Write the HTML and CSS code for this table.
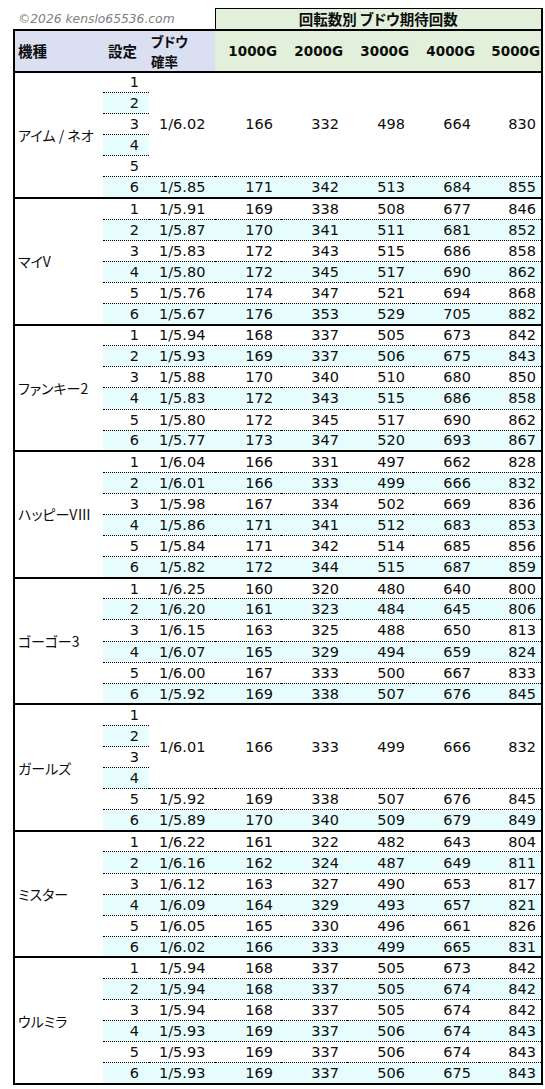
FILE: index.html
```html
<!DOCTYPE html>
<html lang="ja">
<head>
<meta charset="utf-8">
<title>回転数別 ブドウ期待回数</title>
<link rel="stylesheet" href="styles.css">
</head>
<body>
<table class="tbl">
  <colgroup>
    <col class="c-name"><col class="c-set"><col class="c-prob">
    <col class="c-g"><col class="c-g"><col class="c-g"><col class="c-g"><col class="c-g5">
  </colgroup>
  <thead>
    <tr class="r-title">
      <td colspan="3" class="copy">©2026 kenslo65536.com</td>
      <th colspan="5" class="title">回転数別 ブドウ期待回数</th>
    </tr>
    <tr class="r-head">
      <th class="h-name">機種</th>
      <th class="h-set">設定</th>
      <th class="h-prob"><span class="h-line">ブドウ</span><span class="h-line">確率</span></th>
      <th class="h-g">1000G</th>
      <th class="h-g">2000G</th>
      <th class="h-g">3000G</th>
      <th class="h-g">4000G</th>
      <th class="h-g h-last">5000G</th>
    </tr>
  </thead>
  <tbody>
    <tr><td class="name" rowspan="6">アイム / ネオ</td><td class="set">1</td><td class="prob" rowspan="5">1/6.02</td><td rowspan="5">166</td><td rowspan="5">332</td><td rowspan="5">498</td><td rowspan="5">664</td><td class="z" rowspan="5">830</td></tr>
    <tr><td class="set">2</td></tr>
    <tr><td class="set">3</td></tr>
    <tr><td class="set">4</td></tr>
    <tr><td class="set">5</td></tr>
    <tr><td class="set">6</td><td class="prob">1/5.85</td><td>171</td><td>342</td><td>513</td><td>684</td><td class="z">855</td></tr>
  </tbody>
  <tbody>
    <tr><td class="name" rowspan="6">マイV</td><td class="set">1</td><td class="prob">1/5.91</td><td>169</td><td>338</td><td>508</td><td>677</td><td class="z">846</td></tr>
    <tr><td class="set">2</td><td class="prob">1/5.87</td><td>170</td><td>341</td><td>511</td><td>681</td><td class="z">852</td></tr>
    <tr><td class="set">3</td><td class="prob">1/5.83</td><td>172</td><td>343</td><td>515</td><td>686</td><td class="z">858</td></tr>
    <tr><td class="set">4</td><td class="prob">1/5.80</td><td>172</td><td>345</td><td>517</td><td>690</td><td class="z">862</td></tr>
    <tr><td class="set">5</td><td class="prob">1/5.76</td><td>174</td><td>347</td><td>521</td><td>694</td><td class="z">868</td></tr>
    <tr><td class="set">6</td><td class="prob">1/5.67</td><td>176</td><td>353</td><td>529</td><td>705</td><td class="z">882</td></tr>
  </tbody>
  <tbody>
    <tr><td class="name" rowspan="6">ファンキー2</td><td class="set">1</td><td class="prob">1/5.94</td><td>168</td><td>337</td><td>505</td><td>673</td><td class="z">842</td></tr>
    <tr><td class="set">2</td><td class="prob">1/5.93</td><td>169</td><td>337</td><td>506</td><td>675</td><td class="z">843</td></tr>
    <tr><td class="set">3</td><td class="prob">1/5.88</td><td>170</td><td>340</td><td>510</td><td>680</td><td class="z">850</td></tr>
    <tr><td class="set">4</td><td class="prob">1/5.83</td><td>172</td><td>343</td><td>515</td><td>686</td><td class="z">858</td></tr>
    <tr><td class="set">5</td><td class="prob">1/5.80</td><td>172</td><td>345</td><td>517</td><td>690</td><td class="z">862</td></tr>
    <tr><td class="set">6</td><td class="prob">1/5.77</td><td>173</td><td>347</td><td>520</td><td>693</td><td class="z">867</td></tr>
  </tbody>
  <tbody>
    <tr><td class="name" rowspan="6">ハッピーVⅢ</td><td class="set">1</td><td class="prob">1/6.04</td><td>166</td><td>331</td><td>497</td><td>662</td><td class="z">828</td></tr>
    <tr><td class="set">2</td><td class="prob">1/6.01</td><td>166</td><td>333</td><td>499</td><td>666</td><td class="z">832</td></tr>
    <tr><td class="set">3</td><td class="prob">1/5.98</td><td>167</td><td>334</td><td>502</td><td>669</td><td class="z">836</td></tr>
    <tr><td class="set">4</td><td class="prob">1/5.86</td><td>171</td><td>341</td><td>512</td><td>683</td><td class="z">853</td></tr>
    <tr><td class="set">5</td><td class="prob">1/5.84</td><td>171</td><td>342</td><td>514</td><td>685</td><td class="z">856</td></tr>
    <tr><td class="set">6</td><td class="prob">1/5.82</td><td>172</td><td>344</td><td>515</td><td>687</td><td class="z">859</td></tr>
  </tbody>
  <tbody>
    <tr><td class="name" rowspan="6">ゴーゴー3</td><td class="set">1</td><td class="prob">1/6.25</td><td>160</td><td>320</td><td>480</td><td>640</td><td class="z">800</td></tr>
    <tr><td class="set">2</td><td class="prob">1/6.20</td><td>161</td><td>323</td><td>484</td><td>645</td><td class="z">806</td></tr>
    <tr><td class="set">3</td><td class="prob">1/6.15</td><td>163</td><td>325</td><td>488</td><td>650</td><td class="z">813</td></tr>
    <tr><td class="set">4</td><td class="prob">1/6.07</td><td>165</td><td>329</td><td>494</td><td>659</td><td class="z">824</td></tr>
    <tr><td class="set">5</td><td class="prob">1/6.00</td><td>167</td><td>333</td><td>500</td><td>667</td><td class="z">833</td></tr>
    <tr><td class="set">6</td><td class="prob">1/5.92</td><td>169</td><td>338</td><td>507</td><td>676</td><td class="z">845</td></tr>
  </tbody>
  <tbody>
    <tr><td class="name" rowspan="6">ガールズ</td><td class="set">1</td><td class="prob" rowspan="4">1/6.01</td><td rowspan="4">166</td><td rowspan="4">333</td><td rowspan="4">499</td><td rowspan="4">666</td><td class="z" rowspan="4">832</td></tr>
    <tr><td class="set">2</td></tr>
    <tr><td class="set">3</td></tr>
    <tr><td class="set">4</td></tr>
    <tr><td class="set">5</td><td class="prob">1/5.92</td><td>169</td><td>338</td><td>507</td><td>676</td><td class="z">845</td></tr>
    <tr><td class="set">6</td><td class="prob">1/5.89</td><td>170</td><td>340</td><td>509</td><td>679</td><td class="z">849</td></tr>
  </tbody>
  <tbody>
    <tr><td class="name" rowspan="6">ミスター</td><td class="set">1</td><td class="prob">1/6.22</td><td>161</td><td>322</td><td>482</td><td>643</td><td class="z">804</td></tr>
    <tr><td class="set">2</td><td class="prob">1/6.16</td><td>162</td><td>324</td><td>487</td><td>649</td><td class="z">811</td></tr>
    <tr><td class="set">3</td><td class="prob">1/6.12</td><td>163</td><td>327</td><td>490</td><td>653</td><td class="z">817</td></tr>
    <tr><td class="set">4</td><td class="prob">1/6.09</td><td>164</td><td>329</td><td>493</td><td>657</td><td class="z">821</td></tr>
    <tr><td class="set">5</td><td class="prob">1/6.05</td><td>165</td><td>330</td><td>496</td><td>661</td><td class="z">826</td></tr>
    <tr><td class="set">6</td><td class="prob">1/6.02</td><td>166</td><td>333</td><td>499</td><td>665</td><td class="z">831</td></tr>
  </tbody>
  <tbody>
    <tr><td class="name" rowspan="6">ウルミラ</td><td class="set">1</td><td class="prob">1/5.94</td><td>168</td><td>337</td><td>505</td><td>673</td><td class="z">842</td></tr>
    <tr><td class="set">2</td><td class="prob">1/5.94</td><td>168</td><td>337</td><td>505</td><td>674</td><td class="z">842</td></tr>
    <tr><td class="set">3</td><td class="prob">1/5.94</td><td>168</td><td>337</td><td>505</td><td>674</td><td class="z">842</td></tr>
    <tr><td class="set">4</td><td class="prob">1/5.93</td><td>169</td><td>337</td><td>506</td><td>674</td><td class="z">843</td></tr>
    <tr><td class="set">5</td><td class="prob">1/5.93</td><td>169</td><td>337</td><td>506</td><td>674</td><td class="z">843</td></tr>
    <tr><td class="set">6</td><td class="prob">1/5.93</td><td>169</td><td>337</td><td>506</td><td>675</td><td class="z">843</td></tr>
  </tbody>
</table>
</body>
</html>
```

FILE: styles.css
```css
html, body {
  margin: 0;
  padding: 0;
  background: #ffffff;
}

body {
  font-family: "DejaVu Sans", "Noto Sans CJK JP", sans-serif;
  color: #0d0d0d;
}

.tbl {
  border-collapse: collapse;
  table-layout: fixed;
  width: 528px;
  margin: 8px 0 0 13px;
  border-right: 2px solid #000;
}

.c-name { width: 89px; }
.c-set { width: 46px; }
.c-prob { width: 66px; }
.c-g { width: 66px; }
.c-g5 { width: 63px; }

/* title row */
.r-title { height: 21px; }

.copy {
  padding: 0 0 0 4px;
  font-size: 12.3px;
  font-style: italic;
  color: #808080;
  text-align: left;
  vertical-align: middle;
  white-space: nowrap;
  overflow: visible;
}

.title {
  padding: 0;
  background: #e2efda;
  border-top: 1px solid #000;
  border-left: 1px solid #000;
  font-family: "Noto Sans CJK JP", sans-serif;
  font-feature-settings: "palt";
  font-size: 14.5px;
  font-weight: bold;
  line-height: 18px;
  text-align: center;
  vertical-align: middle;
}

/* header row */
.r-head { height: 42px; }

.r-head th {
  padding: 0;
  border-top: 2px solid #000;
  border-bottom: 2px solid #000;
  vertical-align: middle;
  font-weight: bold;
  white-space: nowrap;
}

.h-name, .h-set, .h-prob {
  background: #dadff1;
  text-align: left;
  font-family: "Noto Sans CJK JP", sans-serif;
  font-feature-settings: "palt";
  font-size: 14.5px;
  line-height: 18px;
}

.h-prob { font-size: 13.5px; }

.h-line {
  display: block;
  height: 20px;
  line-height: 20px;
}

.h-name {
  border-left: 2px solid #000;
  padding-left: 3px !important;
}

.h-set { padding-left: 5px !important; }
.h-prob { padding-left: 2px !important; }

.h-g {
  background: #e2efda;
  font-size: 13.5px;
  text-align: right;
  padding-right: 4px !important;
}

.h-last { padding-right: 1px !important; }

/* body */
.tbl tbody tr { height: 21.1px; }

.tbl tbody td {
  padding: 0 8px 0 0;
  border-top: 1px dotted #000;
  font-size: 14.5px;
  line-height: 18px;
  text-align: right;
  vertical-align: middle;
  white-space: nowrap;
}

.tbl tbody tr:first-child td {
  border-top: 2px solid #000;
}

.tbl tbody tr:nth-child(even) td {
  background: #e7fdfd;
}

.tbl tbody:last-child tr:last-child td,
.tbl tbody:last-child td.name {
  border-bottom: 2px solid #000;
}

.tbl tbody td.name {
  padding-left: 3px;
  border-left: 2px solid #000;
  background: #fff;
  text-align: left;
  font-family: "Noto Sans CJK JP", sans-serif;
  font-feature-settings: "palt";
  font-size: 14px;
}

.tbl tbody td.set { padding-right: 10px; }

.tbl tbody td.prob {
  padding: 0 0 0 10px;
  text-align: left;
}

.tbl tbody td.z { padding-right: 5px; }
```
